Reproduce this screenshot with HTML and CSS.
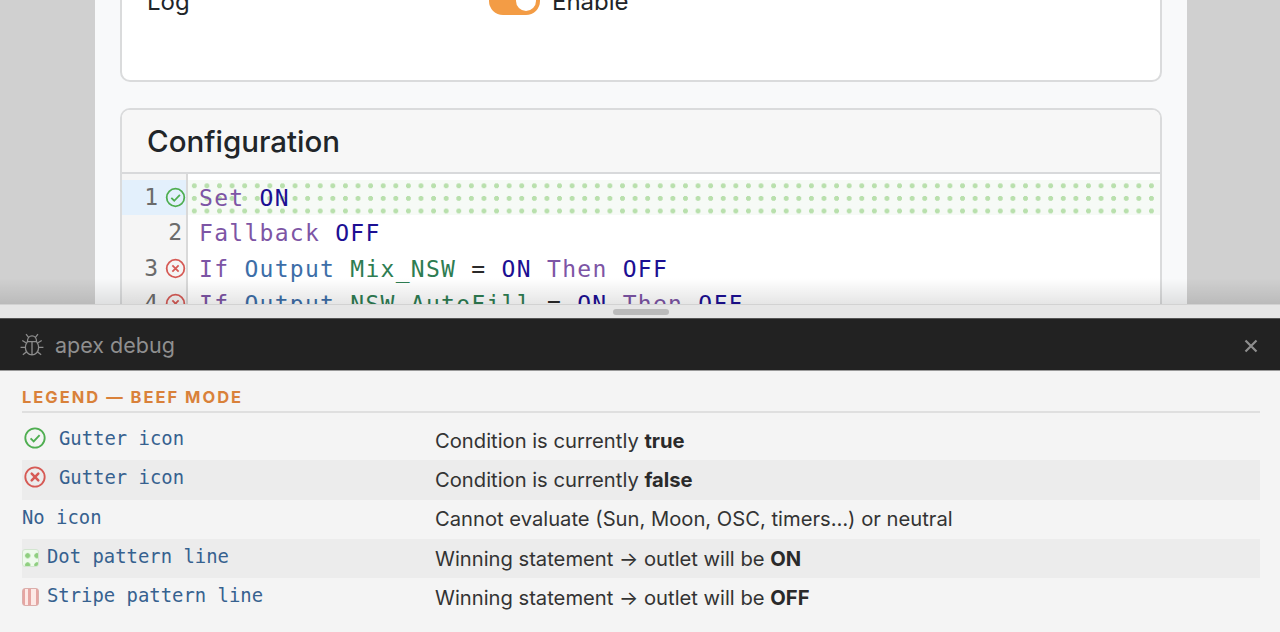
FILE: index.html
```html
<!DOCTYPE html>
<html lang="en">
<head>
<meta charset="utf-8">
<title>apex debug</title>
<link rel="stylesheet" href="styles.css">
</head>
<body>
<main class="pane">
  <div class="page">
    <section class="card card-log">
      <div class="log-row">
        <span class="log-label">Log</span>
        <span class="toggle"><span class="knob"></span></span>
        <span class="log-enable">Enable</span>
      </div>
    </section>
    <section class="card card-config">
      <h2 class="card-title">Configuration</h2>
      <div class="editor">
        <div class="line">
          <div class="gutter active"><span>1</span><svg class="gi" viewBox="0 0 20 20"><circle class="ok" cx="10" cy="10" r="8.4"/><path class="ok" d="M6 10.3l2.8 2.8L14.2 7.4"/></svg></div>
          <div class="code dots"><span class="kw">Set</span> <span class="val">ON</span></div>
        </div>
        <div class="line">
          <div class="gutter"><span>2</span></div>
          <div class="code"><span class="kw">Fallback</span> <span class="val">OFF</span></div>
        </div>
        <div class="line">
          <div class="gutter"><span>3</span><svg class="gi" viewBox="0 0 20 20"><circle class="bad" cx="10" cy="10" r="8.4"/><path class="bad" d="M7 7l6 6M13 7l-6 6"/></svg></div>
          <div class="code"><span class="kw">If</span> <span class="dev">Output</span> <span class="name">Mix_NSW</span> = <span class="val">ON</span> <span class="kw">Then</span> <span class="val">OFF</span></div>
        </div>
        <div class="line">
          <div class="gutter"><span>4</span><svg class="gi" viewBox="0 0 20 20"><circle class="bad" cx="10" cy="10" r="8.4"/><path class="bad" d="M7 7l6 6M13 7l-6 6"/></svg></div>
          <div class="code"><span class="kw">If</span> <span class="dev">Output</span> <span class="name">NSW_AutoFill</span> = <span class="val">ON</span> <span class="kw">Then</span> <span class="val">OFF</span></div>
        </div>
      </div>
    </section>
  </div>
</main>
<div class="resizer"><span class="handle"></span></div>
<header class="debug-bar">
  <svg class="bug" viewBox="1.5 2 21 20"><path d="M8 9.5h8c1.2 1.6 1.8 3.4 1.8 5.2 0 3.600-2.600 6.300-5.800 6.300s-5.800-2.700-5.800-6.300c0-1.800.6-3.600 1.800-5.200zM8 9.500C8 6.500 9.800 4.500 12 4.500s4 2 4 5M12 9.500V21M8.800 5.500L6.800 3M15.200 5.500L17.200 3M6.700 10.500L3.500 8.500M17.300 10.500l3.200-2M6.200 14.500H2M17.800 14.500H22M7 18.500l-3 2.500M17 18.500l3 2.500"/></svg>
  <span class="debug-title">apex debug</span>
  <svg class="close" viewBox="0 0 14 14"><path d="M1.500 1.500l11 11M12.500 1.500l-11 11"/></svg>
</header>
<section class="legend">
  <h3 class="legend-title">LEGEND — BEEF MODE</h3>
  <div class="rows">
    <div class="row"><div class="key key-icon"><svg class="li" viewBox="0 0 20 20"><circle class="ok" cx="10" cy="10" r="8.800"/><path class="ok" d="M6 10.300l2.800 2.800L14.200 7.400"/></svg><code>Gutter icon</code></div><div class="desc">Condition is currently <b>true</b></div></div>
    <div class="row alt"><div class="key key-icon"><svg class="li" viewBox="0 0 20 20"><circle class="bad" cx="10" cy="10" r="8.800"/><path class="bad thick" d="M7 7l6 6M13 7l-6 6"/></svg><code>Gutter icon</code></div><div class="desc">Condition is currently <b>false</b></div></div>
    <div class="row"><div class="key"><code>No icon</code></div><div class="desc">Cannot evaluate (Sun, Moon, OSC, timers…) or neutral</div></div>
    <div class="row alt"><div class="key"><span class="swatch sw-dots"></span><code>Dot pattern line</code></div><div class="desc">Winning statement → outlet will be <b>ON</b></div></div>
    <div class="row"><div class="key"><span class="swatch sw-stripes"></span><code>Stripe pattern line</code></div><div class="desc">Winning statement → outlet will be <b>OFF</b></div></div>
  </div>
</section>
</body>
</html>
```
FILE: styles.css
```css
* { box-sizing: border-box; }
html, body { margin: 0; height: 632px; overflow: hidden; }
body { display: flex; flex-direction: column; background: #f4f4f4; font-family: Inter, "Liberation Sans", sans-serif; color: #212529; }

.pane { position: relative; height: 304px; flex: none; overflow: hidden; background: #d0d0d0; }
.pane::after { content: ""; position: absolute; left: 0; right: 0; bottom: 0; height: 26px; background: linear-gradient(rgba(0,0,0,0), rgba(0,0,0,.1)); }
.page { display: flow-root; width: 1092px; margin-left: 95px; height: 304px; background: #f8f9fa; padding: 0 25px; }

.card { background: #fff; border: 2px solid #dadbdc; border-radius: 10px; width: 1042px; }
.card-log { height: 122px; margin-top: -40px; padding: 25px 25px 0; }
.log-row { display: flex; align-items: center; height: 28px; }
.log-label { width: 342px; font-size: 24px; line-height: 28px; margin-top: 1px; }
.toggle { position: relative; width: 51px; height: 28px; flex: none; border-radius: 14px; background: #f39c45; }
.knob { position: absolute; right: 4px; top: 4px; width: 20px; height: 20px; border-radius: 50%; background: #fff; }
.log-enable { margin-left: 12px; font-size: 24px; line-height: 28px; margin-top: 1px; }

.card-config { margin-top: 26px; height: 400px; overflow: hidden; }
.card-title { margin: 0; height: 64px; padding: 0 25px; display: flex; align-items: center; background: #f7f7f7; border-bottom: 2px solid #d8d9db; font-size: 29.5px; font-weight: 500; }
.line { display: flex; height: 35.400px; }
.editor { padding-top: 6px; background: linear-gradient(90deg, #f5f5f5 64px, #d9d9d9 64px, #d9d9d9 66px, #fff 66px); }
.gutter { width: 64px; flex: none; display: flex; justify-content: flex-end; align-items: center; gap: 7px; padding-right: 4px; font: 23px/35.400px "DejaVu Sans Mono", monospace; color: #6b6b6b; }
.gutter:has(svg) { padding-right: 0; }
.gutter.active { background: #e3f0fc; }
.gi { width: 21px; height: 21px; flex: none; }
.code { margin-left: 2px; flex: 1; padding-left: 11px; font: 23px/36px "DejaVu Sans Mono", monospace; letter-spacing: 1.280px; color: #2a2a2a; white-space: pre; }
.dots { background-color: #f6faf6; background-image: radial-gradient(circle, #b9e0ad 2.200px, rgba(185,224,173,0) 2.800px); background-size: 12.600px 12.600px; background-position: 0 -0.500px; }
.kw { color: #7d55a5; }
.val { color: #1c0f93; }
.dev { color: #3d6ea8; }
.name { color: #2e7d52; }

svg circle, svg path { fill: none; }
.ok { stroke: #4fae51; stroke-width: 1.700; }
.bad { stroke: #d65a55; stroke-width: 1.700; }
.thick { stroke-width: 2.300; stroke-linecap: round; }

.resizer { flex: none; height: 14px; background: #e6e6e6; border-top: 1px solid #d2d2d2; display: flex; justify-content: center; padding-top: 4px; }
.handle { width: 56px; height: 6px; border-radius: 3px; background: #bbb; margin-left: 2px; }

.debug-bar { flex: none; height: 53px; display: flex; align-items: center; background: #222; border-top: 1px solid #555; border-bottom: 1px solid #999; padding: 0 22px 0 20px; }
.bug { width: 24px; height: 23px; fill: none; }
.bug path { stroke: #8c8c8c; stroke-width: 1.150; }
.debug-title { margin-left: 11px; font-size: 21.500px; color: #8f8f8f; }
.close { margin-left: auto; width: 14px; height: 14px; margin-top: 3px; }
.close path { stroke: #8e8e8e; stroke-width: 2.200; }

.legend { flex: 1; padding: 16px 20px 0 22px; }
.legend-title { margin: 0; height: 26px; border-bottom: 2px solid #dfdfdf; font-size: 16.500px; line-height: 20px; font-weight: 700; letter-spacing: 2px; color: #d9813a; }
.rows { margin-top: 8px; }
.row { display: grid; grid-template-columns: 413px 1fr; height: 39.300px; align-items: center; }
.row.alt { background: #ececec; }
.key { display: flex; align-items: center; margin-top: -5px; }
.key-icon .li { margin-right: 13px; margin-left: 2px; }
.li { width: 22px; height: 22px; }
code { font: 18.900px/24px "DejaVu Sans Mono", monospace; color: #36618f; white-space: pre; }
.desc { font-size: 20.200px; color: #333; margin-top: -1px; }
.desc b { font-weight: 700; color: #2a2a2a; }
.swatch { width: 17px; height: 18px; margin-right: 8px; border-radius: 3px; flex: none; margin-top: 3px; }
.sw-dots { background-color: #eefaec; border: 1px solid #d2e5cf; background-image: radial-gradient(circle, #8fcf80 2.300px, rgba(143,207,128,0) 2.900px); background-size: 9.300px 9.300px; background-position: 0 1px; }
.sw-stripes { border: 1px solid #dbaeab; background: linear-gradient(90deg, #e6a5a2 0, #e6a5a2 1.500px, #fde9e6 1.500px, #fde9e6 5px, #e6a5a2 5px, #e6a5a2 8px, #fde9e6 8px, #fde9e6 13px, #e6a5a2 13px); }
```
